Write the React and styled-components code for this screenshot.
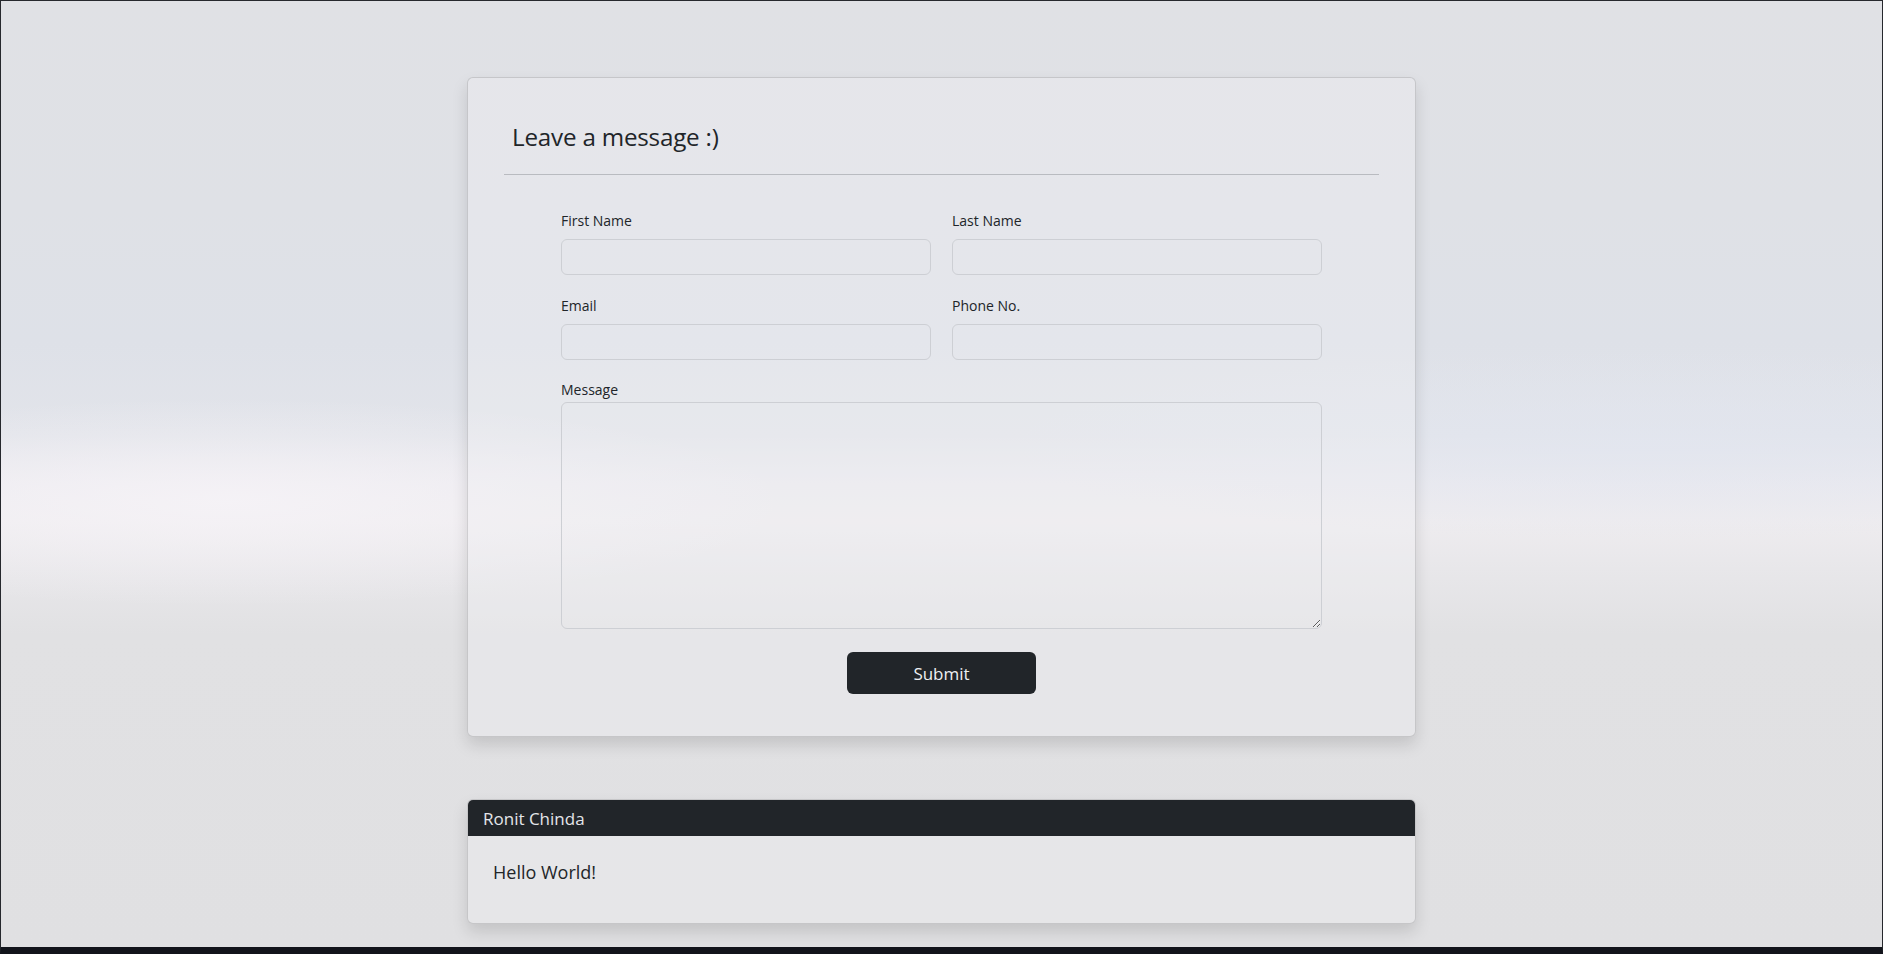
import React from "react";
import styled, { createGlobalStyle } from "styled-components";

const GlobalStyle = createGlobalStyle`
  html, body {
    margin: 0;
    padding: 0;
  }
  body {
    font-family: "Open Sans", "Noto Sans", sans-serif;
    color: #212529;
  }
  * {
    box-sizing: border-box;
  }
`;

const Frame = styled.div`
  height: 100vh;
  border: 1px solid #26282d;
  border-bottom: 7px solid #12141b;
  overflow: hidden;
  background:
    radial-gradient(ellipse 30% 11% at 12% 53%, rgba(246, 243, 247, 0.85), rgba(246, 243, 247, 0) 100%),
    radial-gradient(ellipse 35% 10% at 88% 47%, rgba(226, 230, 240, 0.7), rgba(226, 230, 240, 0) 100%),
    linear-gradient(
      180deg,
      #e0e1e5 0%,
      #dfe1e6 22%,
      #dee1e8 36%,
      #e2e4ea 46%,
      #ebeaef 51%,
      #eeecef 55%,
      #e8e7ea 60%,
      #e1e1e3 67%,
      #e0e0e2 100%
    );
`;

const Column = styled.main`
  width: 949px;
  margin: 0 auto;
  padding-top: 76px;
  display: flex;
  flex-direction: column;
  gap: 62px;
`;

const Card = styled.section`
  border: 1px solid rgba(0, 0, 0, 0.14);
  border-radius: 6px;
  background: rgba(240, 241, 243, 0.35);
  box-shadow: 0 8px 16px rgba(0, 0, 0, 0.13);
  overflow: hidden;
`;

const FormCard = styled(Card)`
  padding: 0 36px 42px;
`;

const Title = styled.h3`
  margin: 0;
  padding: 41px 0 19px 8px;
  font-size: 24.2px;
  font-weight: 400;
  line-height: 36px;
  letter-spacing: -0.2px;
`;

const Divider = styled.hr`
  margin: 0;
  border: 0;
  border-top: 1px solid #b9bbc0;
`;

const Form = styled.form`
  width: 761px;
  margin: 35px auto 0;
  display: flex;
  flex-direction: column;
  align-items: center;
`;

const Row = styled.div`
  width: 100%;
  display: grid;
  grid-template-columns: 1fr 1fr;
  column-gap: 21px;
  margin-bottom: ${(p) => p.$gap || 0}px;
`;

const Field = styled.div`
  display: flex;
  flex-direction: column;
  width: 100%;
`;

const Label = styled.label`
  font-size: 14px;
  line-height: 22px;
  margin-bottom: ${(p) => p.$gap ?? 7}px;
  color: #212529;
`;

const Input = styled.input`
  height: 36px;
  border: 1px solid #cdcfd4;
  border-radius: 6px;
  background: transparent;
  padding: 6px 12px;
  font: inherit;
  outline: none;
`;

const TextArea = styled.textarea`
  height: 227px;
  border: 1px solid #cdcfd4;
  border-radius: 6px;
  background: transparent;
  padding: 6px 12px;
  font: inherit;
  outline: none;
  resize: vertical;
`;

const SubmitButton = styled.button`
  margin-top: 23px;
  width: 189px;
  height: 42px;
  border: 0;
  border-radius: 6px;
  background: #212529;
  color: #eef0f3;
  font-family: inherit;
  font-size: 17px;
  cursor: pointer;
`;

const CardHeader = styled.header`
  height: 36px;
  display: flex;
  align-items: center;
  padding: 0 15px;
  background: #212529;
  color: #e4e6ea;
  font-size: 17px;
`;

const CardBody = styled.div`
  height: 87px;
  padding: 23px 25px 0;
  font-size: 18px;
  line-height: 27px;
  color: #212529;
`;

export default function App() {
  return (
    <>
      <GlobalStyle />
      <Frame>
        <Column>
          <FormCard>
            <Title>Leave a message :)</Title>
            <Divider />
            <Form onSubmit={(e) => e.preventDefault()}>
              <Row $gap={20}>
                <Field>
                  <Label>First Name</Label>
                  <Input type="text" />
                </Field>
                <Field>
                  <Label>Last Name</Label>
                  <Input type="text" />
                </Field>
              </Row>
              <Row $gap={19}>
                <Field>
                  <Label>Email</Label>
                  <Input type="email" />
                </Field>
                <Field>
                  <Label>Phone No.</Label>
                  <Input type="tel" />
                </Field>
              </Row>
              <Field>
                <Label $gap={1}>Message</Label>
                <TextArea />
              </Field>
              <SubmitButton type="submit">Submit</SubmitButton>
            </Form>
          </FormCard>
          <Card>
            <CardHeader>Ronit Chinda</CardHeader>
            <CardBody>Hello World!</CardBody>
          </Card>
        </Column>
      </Frame>
    </>
  );
}
